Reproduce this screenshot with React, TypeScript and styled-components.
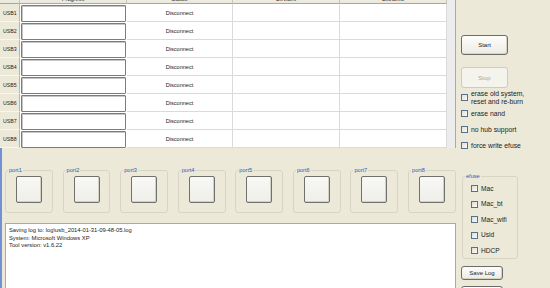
import React from "react";
import styled, { createGlobalStyle } from "styled-components";

const Global = createGlobalStyle`
  html, body { margin: 0; padding: 0; background: #ece9d8; }
  body {
    width: 550px; height: 288px; overflow: hidden;
    font-family: "Liberation Sans", Arial, sans-serif;
    color: #1c1c1c;
  }
`;

const Window = styled.div`
  display: flex;
  width: 550px;
  height: 288px;
  overflow: hidden;
  background: #ece9d8;
`;

const LeftCol = styled.div`
  width: 456px;
  flex-shrink: 0;
  display: flex;
  flex-direction: column;
`;

const Grid = styled.div`
  margin-top: -16px;
  width: 456px;
  box-sizing: border-box;
  display: flex;
  flex-direction: column;
  background: #ececec;
  border-right: 1px solid #a9a9a9;
`;

const HeaderRow = styled.div`
  display: flex;
  height: 20px;
`;

const HeaderCell = styled.div<{ $w: number }>`
  width: ${(p) => p.$w}px;
  box-sizing: border-box;
  display: flex;
  align-items: flex-end;
  justify-content: center;
  padding-bottom: 1px;
  background: linear-gradient(#f8f7f1, #ebe9dc);
  border-right: 1px solid #c9c6b4;
  border-bottom: 1px solid #aca899;
  font-size: 5.6px;
  line-height: 6px;
`;

const Row = styled.div`
  display: flex;
  height: 18px;
`;

const RowHead = styled.div`
  width: 20px;
  box-sizing: border-box;
  display: flex;
  align-items: center;
  padding-left: 3px;
  background: #ece9d8;
  border-right: 1px solid #b9b6a6;
  border-bottom: 1px solid #f7f6f0;
  font-size: 5.2px;
`;

const ProgressCell = styled.div`
  width: 107px;
  box-sizing: border-box;
  padding: 1px 1px 0 1px;
  display: flex;
  background: #fff;
`;

const ProgressBox = styled.div`
  flex: 1;
  border: 1px solid #7c7c7c;
  border-radius: 1px;
  box-shadow: inset 1px 1px 0 #c6c6c6;
  background: #fff;
`;

const DataCell = styled.div<{ $w: number }>`
  width: ${(p) => p.$w}px;
  box-sizing: border-box;
  display: flex;
  align-items: center;
  justify-content: center;
  background: #fff;
  border-right: 1px solid #dadada;
  border-bottom: 1px solid #dadada;
  font-size: 5.6px;
`;

const Lower = styled.div`
  flex: 1;
  display: flex;
  flex-direction: column;
  padding-left: 3px;
  border-left: 2px solid #7190d6;
`;

const PortsRow = styled.div`
  display: flex;
  gap: 9.7px;
  margin-top: 19px;
  height: 46px;
`;

const Group = styled.fieldset<{ $w: number; $h: number }>`
  width: ${(p) => p.$w}px;
  height: ${(p) => p.$h}px;
  min-width: 0;
  box-sizing: border-box;
  margin: 0;
  padding: 0;
  border: 1px solid #d9d5c4;
  border-radius: 3px;
  display: flex;
  flex-direction: column;
`;

const PortGroup = styled(Group)`
  align-items: center;
`;

const Legend = styled.legend`
  font-size: 5.6px;
  line-height: 6px;
  color: #2f57bd;
  padding: 0 1px;
  margin-left: 2px;
`;

const PortButton = styled.div`
  margin-top: 3px;
  width: 26px;
  height: 27px;
  box-sizing: border-box;
  border: 1px solid #6f716d;
  border-radius: 2px;
  background: linear-gradient(#f8f8f5, #efeee8);
  box-shadow: inset -1px -1px 0 #d3d1c6;
`;

const LogBox = styled.div`
  margin-top: 10px;
  height: 80px;
  box-sizing: border-box;
  background: #fff;
  border: 1px solid #a4aab2;
  padding: 3px 3px;
  font-size: 5.8px;
  line-height: 7.5px;
  white-space: pre;
`;

const RightCol = styled.div`
  flex: 1;
  display: flex;
  flex-direction: column;
  align-items: flex-start;
  padding-left: 5px;
`;

const XpButton = styled.div<{ $w: number; $h: number; $mt: number; $off?: boolean }>`
  width: ${(p) => p.$w}px;
  height: ${(p) => p.$h}px;
  margin-top: ${(p) => p.$mt}px;
  box-sizing: border-box;
  display: flex;
  align-items: center;
  justify-content: center;
  border: 1px solid ${(p) => (p.$off ? "#cfccbc" : "#6c6c6a")};
  border-radius: 3px;
  background: ${(p) => (p.$off ? "#f4f3ec" : "linear-gradient(#fdfdfb, #ecebe4)")};
  box-shadow: ${(p) => (p.$off ? "none" : "inset -1px -1px 0 #d6d3c5")};
  color: ${(p) => (p.$off ? "#a9a79a" : "#1c1c1c")};
  font-size: 6px;
  flex-shrink: 0;
`;

const CheckList = styled.div`
  margin-top: 2px;
  display: flex;
  flex-direction: column;
`;

const CheckRow = styled.div<{ $h: number; $fs?: number }>`
  height: ${(p) => p.$h}px;
  display: flex;
  align-items: center;
  gap: 3px;
  font-size: ${(p) => p.$fs ?? 6.8}px;
  line-height: 7.6px;
`;

const Box = styled.div`
  width: 7px;
  height: 7px;
  flex-shrink: 0;
  box-sizing: border-box;
  border: 1px solid #56718f;
  background: linear-gradient(135deg, #dedcd3, #fbfbf8);
`;

const EfuseList = styled.div`
  margin-top: 2px;
  padding-left: 8px;
  display: flex;
  flex-direction: column;
`;

const columns = [
  { w: 20, label: "" },
  { w: 107, label: "Progress" },
  { w: 106, label: "Status" },
  { w: 107, label: "Devices" },
  { w: 107, label: "Extrainfo" },
];

const usbs = ["USB1", "USB2", "USB3", "USB4", "USB5", "USB6", "USB7", "USB8"];
const ports = ["port1", "port2", "port3", "port4", "port5", "port6", "port7", "port8"];
const efuse = ["Mac", "Mac_bt", "Mac_wifi", "Usid", "HDCP"];

export default function App() {
  return (
    <>
      <Global />
      <Window>
        <LeftCol>
          <Grid>
            <HeaderRow>
              {columns.map((c, i) => (
                <HeaderCell key={i} $w={c.w}>{c.label}</HeaderCell>
              ))}
            </HeaderRow>
            {usbs.map((u) => (
              <Row key={u}>
                <RowHead>{u}</RowHead>
                <ProgressCell>
                  <ProgressBox />
                </ProgressCell>
                <DataCell $w={106}>Disconnect</DataCell>
                <DataCell $w={107} />
                <DataCell $w={107} />
              </Row>
            ))}
          </Grid>
          <Lower>
            <PortsRow>
              {ports.map((p) => (
                <PortGroup key={p} $w={48} $h={46}>
                  <Legend>{p}</Legend>
                  <PortButton />
                </PortGroup>
              ))}
            </PortsRow>
            <LogBox>
              {"Saving log to: log\\usb_2014-01-31-09-48-05.log\nSystem: Microsoft Windows XP\nTool version: v1.6.22"}
            </LogBox>
          </Lower>
        </LeftCol>
        <RightCol>
          <XpButton $w={47} $h={20} $mt={35}>Start</XpButton>
          <XpButton $w={47} $h={21} $mt={12} $off>Stop</XpButton>
          <CheckList>
            <CheckRow $h={15.5}>
              <Box />
              <span>erase old system,<br />reset and re-burn</span>
            </CheckRow>
            <CheckRow $h={16}>
              <Box />
              <span>erase nand</span>
            </CheckRow>
            <CheckRow $h={16}>
              <Box />
              <span>no hub support</span>
            </CheckRow>
            <CheckRow $h={16}>
              <Box />
              <span>force write efuse</span>
            </CheckRow>
          </CheckList>
          <Group $w={56} $h={86} style={{ marginTop: 19.5, marginLeft: 1 }}>
            <Legend>efuse</Legend>
            <EfuseList>
              {efuse.map((e) => (
                <CheckRow key={e} $h={15.5} $fs={6.6}>
                  <Box />
                  <span>{e}</span>
                </CheckRow>
              ))}
            </EfuseList>
          </Group>
          <XpButton $w={42} $h={14} $mt={7}>Save Log</XpButton>
          <XpButton $w={42} $h={14} $mt={6} />
        </RightCol>
      </Window>
    </>
  );
}
